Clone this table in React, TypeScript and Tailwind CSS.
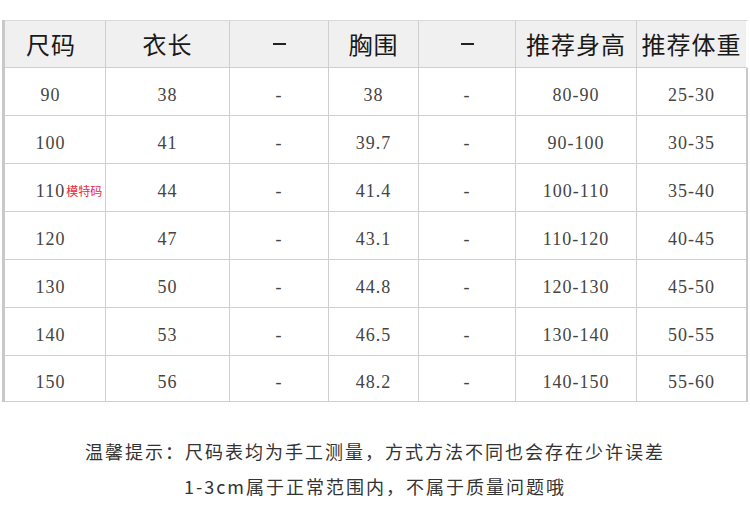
import React from "react";

const headers = ["尺码", "衣长", "–", "胸围", "–", "推荐身高", "推荐体重"];

const rows: string[][] = [
  ["90", "38", "-", "38", "-", "80-90", "25-30"],
  ["100", "41", "-", "39.7", "-", "90-100", "30-35"],
  ["110", "44", "-", "41.4", "-", "100-110", "35-40"],
  ["120", "47", "-", "43.1", "-", "110-120", "40-45"],
  ["130", "50", "-", "44.8", "-", "120-130", "45-50"],
  ["140", "53", "-", "46.5", "-", "130-140", "50-55"],
  ["150", "56", "-", "48.2", "-", "140-150", "55-60"],
];

const cols = "grid grid-cols-[101px_124px_99px_90px_97px_121px_111px]";

const App: React.FC = () => {
  return (
    <div className="w-[750px] h-[530px] bg-white overflow-hidden">
      <div className="pt-[20px] pl-[2px]">
        <div className="w-fit border-l-[3px] border-[#c8c8c8]">
          {/* Header */}
          <div className={`${cols} h-[48px] bg-[#f0f0f0] border-t border-[#dadada]`}>
            {headers.map((h, i) => (
              <div
                key={i}
                className={`flex items-center justify-center border-b border-[#cfcfcf] text-[24px] tracking-[1px] text-[#1a1a1a] [font-family:'Noto_Sans_CJK_SC',sans-serif] ${
                  i < 6 ? "border-r" : "border-r-2 border-r-white"
                } ${i === 0 ? "pr-[8px]" : ""}`}
              >
                {h === "–" ? <span className="block w-[13px] h-[2px] bg-[#222]" /> : h}
              </div>
            ))}
          </div>

          {/* Body */}
          {rows.map((r, ri) => (
            <div key={ri} className={`${cols} ${ri === rows.length - 1 ? "h-[46px]" : "h-[48px]"}`}>
              {r.map((c, ci) => (
                <div
                  key={ci}
                  className={`flex items-center justify-center pt-[7px] border-b border-[#cfcfcf] text-[18px] tracking-[1px] text-[#444] [font-family:'Liberation_Serif',serif] ${
                    ci < 6 ? "border-r" : "border-r-2 border-r-[#c8c8c8]"
                  } ${ci === 0 ? "pr-[9px]" : ""}`}
                >
                  {ri === 2 && ci === 0 ? (
                    <span className="relative">
                      {c}
                      <span className="absolute left-full top-[4px] ml-[1px] whitespace-nowrap text-[12px] tracking-normal text-[#e8283c] [font-family:'Noto_Sans_CJK_SC',sans-serif]">
                        模特码
                      </span>
                    </span>
                  ) : (
                    c
                  )}
                </div>
              ))}
            </div>
          ))}
        </div>
      </div>

      {/* Notice */}
      <div className="mt-[32px] flex flex-col items-center text-[18px] leading-[35px] tracking-[2px] text-[#333] [font-family:'Noto_Sans_CJK_SC',sans-serif]">
        <p>温馨提示：尺码表均为手工测量，方式方法不同也会存在少许误差</p>
        <p>1-3cm属于正常范围内，不属于质量问题哦</p>
      </div>
    </div>
  );
};

export default App;
